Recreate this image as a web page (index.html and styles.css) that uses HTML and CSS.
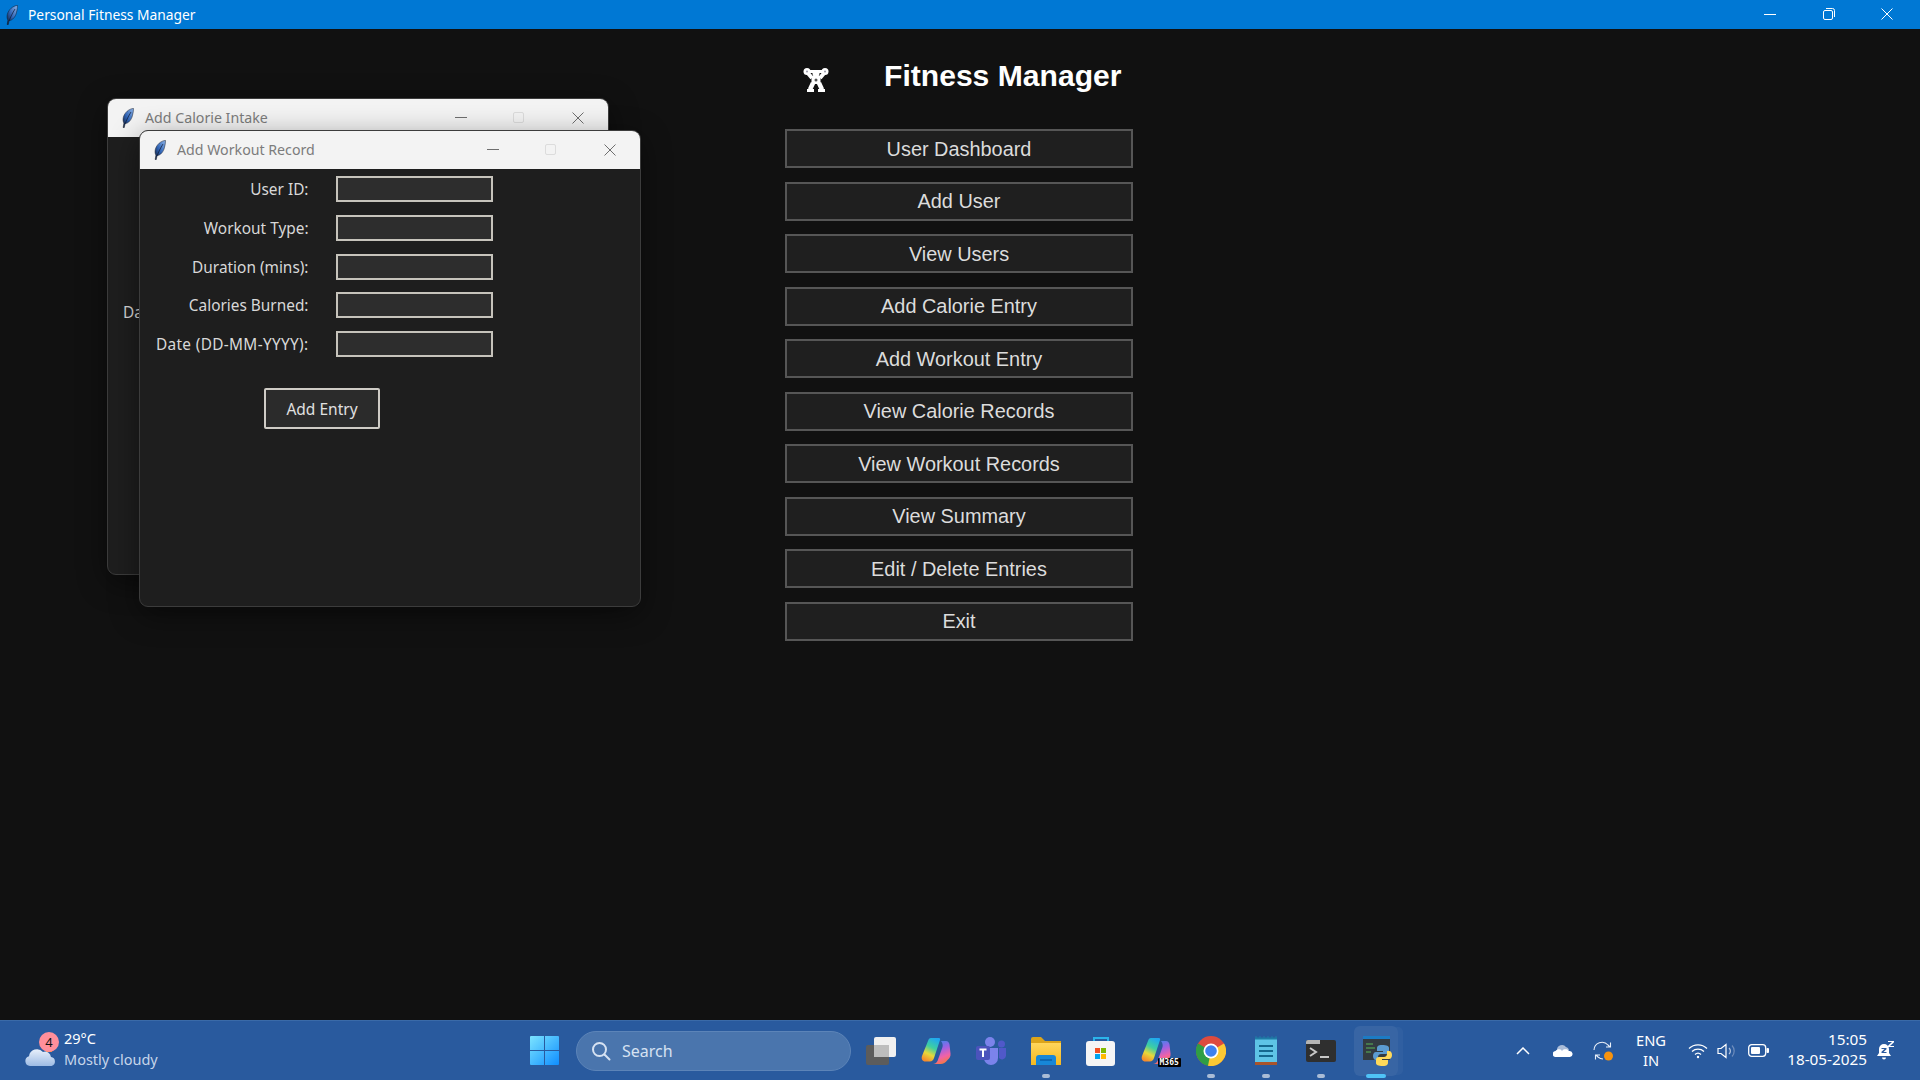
FILE: index.html
```html
<!DOCTYPE html>
<html lang="en">
<head>
<meta charset="utf-8">
<title>Personal Fitness Manager</title>
<link rel="stylesheet" href="styles.css">
</head>
<body>
<svg class="defs" width="0" height="0" aria-hidden="true">
  <defs>
    <linearGradient id="feather" x1="1" y1="0" x2="0" y2="1"><stop offset="0" stop-color="#8fb6ea"/><stop offset=".55" stop-color="#2f63b5"/><stop offset="1" stop-color="#10192c"/></linearGradient>
    <linearGradient id="winlogo" x1="0" y1="0" x2="1" y2="1"><stop offset="0" stop-color="#7ce4ff"/><stop offset="1" stop-color="#0f8eff"/></linearGradient>
    <linearGradient id="cloud" x1="0" y1="0" x2="0" y2="1"><stop offset="0" stop-color="#e8f0fb"/><stop offset="1" stop-color="#9dbbe4"/></linearGradient>
    <linearGradient id="copa" x1=".3" y1="0" x2=".6" y2="1"><stop offset="0" stop-color="#3f86ea"/><stop offset=".35" stop-color="#9b62e6"/><stop offset=".7" stop-color="#f062a8"/><stop offset="1" stop-color="#f57a3c"/></linearGradient>
    <linearGradient id="copb" x1=".7" y1="0" x2=".3" y2="1"><stop offset="0" stop-color="#1fa8f0"/><stop offset=".4" stop-color="#3fd0a0"/><stop offset=".7" stop-color="#e8d83a"/><stop offset="1" stop-color="#f58a2c"/></linearGradient>
    <linearGradient id="folder" x1="0" y1="0" x2="0" y2="1"><stop offset="0" stop-color="#ffd65c"/><stop offset="1" stop-color="#f5b81f"/></linearGradient>
    <symbol id="quill" viewBox="0 0 12 20"><path d="M11.500.4C7 .8 2.500 4.500 1.300 9.500c-.5 2.200-.2 4.300.6 5.600L1.200 19.500l1 .2.9-4c3.800-.6 6.200-3.900 7.300-7.900.7-2.700 1.200-5.300 1.100-7.400z" fill="url(#feather)" stroke="#10182a" stroke-width=".5"/><path d="M9 4C6.500 8 4.500 12 3 16" stroke="#0e1a33" stroke-width=".7" fill="none"/></symbol>
    <symbol id="copilot" viewBox="0 0 30 28"><path d="M20 4h5c2 0 3 1.500 3.500 3.500l1 9c.4 3-1 5-3 6.500-2 2.500-4 4-7 4H12c2 0 3.500-1 4.500-3l5-14c.6-1.800 0-4-1.500-6z" fill="url(#copa)"/><path d="M10 1h8c1 0 1.500 1 1 2l-6 18c-.7 2-2 3.500-4 3.500H4.500C1.500 24.500 0 22 1 19L7 4c.5-1.800 1.500-3 3-3z" fill="url(#copb)"/></symbol>
  </defs>
</svg>

<header class="app-bar">
  <svg class="app-quill" width="12" height="20"><use href="#quill"/></svg>
  <span class="app-title">Personal Fitness Manager</span>
  <div class="captions">
    <span class="cap"><svg width="12" height="12" viewBox="0 0 12 12"><path d="M0 6.500h12" stroke="#fff"/></svg></span>
    <span class="cap"><svg width="12" height="12" viewBox="0 0 12 12" fill="none" stroke="#fff"><rect x=".5" y="2.500" width="9" height="9" rx="1.500"/><path d="M3 .5h6.500a2 2 0 0 1 2 2V9"/></svg></span>
    <span class="cap"><svg width="12" height="12" viewBox="0 0 12 12"><path d="M.5.5l11 11M11.500.5l-11 11" stroke="#fff"/></svg></span>
  </div>
</header>

<main class="desktop">
  <section class="menu">
    <div class="menu-head">
      <svg class="lifter" width="26" height="26" viewBox="0 0 26 26" fill="#fff">
        <circle cx="4" cy="4.500" r="3.500"/>
        <circle cx="22" cy="4.500" r="3.500"/>
        <rect x="4" y="3" width="18" height="3"/>
        <circle cx="13" cy="6.500" r="3.500"/>
        <path d="M4 5l5 6M22 5l-5 6" stroke="#fff" stroke-width="4" fill="none"/>
        <rect x="8.500" y="9" width="9" height="8"/>
        <path d="M10 16l-3 6.500M16 16l3 6.500" stroke="#fff" stroke-width="4.500" fill="none"/>
        <rect x="4" y="22" width="7" height="3"/>
        <rect x="15" y="22" width="7" height="3"/>
        <circle cx="13" cy="13" r="1.500" fill="#555"/>
        <circle cx="4" cy="4.500" r="1" fill="#99a"/>
        <circle cx="22" cy="4.500" r="1" fill="#99a"/>
      </svg>
      <h1 class="menu-title">Fitness Manager</h1>
    </div>
    <div class="menu-list">
      <button class="menu-btn">User Dashboard</button>
      <button class="menu-btn">Add User</button>
      <button class="menu-btn">View Users</button>
      <button class="menu-btn">Add Calorie Entry</button>
      <button class="menu-btn">Add Workout Entry</button>
      <button class="menu-btn">View Calorie Records</button>
      <button class="menu-btn">View Workout Records</button>
      <button class="menu-btn">View Summary</button>
      <button class="menu-btn">Edit / Delete Entries</button>
      <button class="menu-btn">Exit</button>
    </div>
  </section>

  <section class="win win-calorie">
    <div class="win-bar">
      <svg class="win-quill" width="12" height="20"><use href="#quill"/></svg>
      <span class="win-title">Add Calorie Intake</span>
      <span class="win-cap win-min"></span><span class="win-cap win-max"></span>
      <svg class="win-x" width="12" height="12" viewBox="0 0 12 12"><path d="M.5.5l11 11M11.500.5l-11 11" stroke="#6e6e6e"/></svg>
    </div>
    <div class="win-body calorie-body"><span class="form-label">Da</span></div>
  </section>

  <section class="win win-workout">
    <div class="win-bar">
      <svg class="win-quill" width="12" height="20"><use href="#quill"/></svg>
      <span class="win-title">Add Workout Record</span>
      <span class="win-cap win-min"></span><span class="win-cap win-max"></span>
      <svg class="win-x" width="12" height="12" viewBox="0 0 12 12"><path d="M.5.5l11 11M11.500.5l-11 11" stroke="#6e6e6e"/></svg>
    </div>
    <div class="win-body">
      <div class="form">
        <label class="form-label">User ID:</label><span class="entry"></span>
        <label class="form-label">Workout Type:</label><span class="entry"></span>
        <label class="form-label">Duration (mins):</label><span class="entry"></span>
        <label class="form-label">Calories Burned:</label><span class="entry"></span>
        <label class="form-label label-caps">Date (DD-MM-YYYY):</label><span class="entry"></span>
      </div>
      <button class="add-btn">Add Entry</button>
    </div>
  </section>
</main>

<footer class="taskbar">
  <div class="weather">
    <span class="weather-icon">
      <svg width="34" height="24" viewBox="0 0 34 24"><rect x="22" y="2" width="6" height="6" fill="#f08a24"/><path d="M6 22a5 5 0 0 1-1-9.800A8 8 0 0 1 19 8a6 6 0 0 1 8 5 4.600 4.600 0 0 1 .5 9z" fill="url(#cloud)"/></svg>
      <span class="badge">4</span>
    </span>
    <div class="weather-text"><span class="temp">29°C</span><span class="cond">Mostly cloudy</span></div>
  </div>

  <div class="start">
    <svg width="29" height="29" viewBox="0 0 29 29" fill="url(#winlogo)"><path d="M1 0h13v14H0V1a1 1 0 0 1 1-1zM15 0h13a1 1 0 0 1 1 1v13H15zM0 15h14v14H1a1 1 0 0 1-1-1zM15 15h14v13a1 1 0 0 1-1 1H15z"/></svg>
  </div>

  <div class="search">
    <svg width="20" height="20" viewBox="0 0 20 20" fill="none" stroke="#d6e2f2" stroke-width="2"><circle cx="8.500" cy="8.500" r="6.500"/><path d="M13.500 13.500l5 5" stroke-linecap="round"/></svg>
    <span class="search-text">Search</span>
  </div>

  <div class="apps">
    <span class="app"><svg width="30" height="28" viewBox="0 0 30 28"><rect x="0" y="8" width="23" height="20" rx="2" fill="#5c5c5c"/><rect x="8" y="0" width="22" height="20" rx="2" fill="#f0f0f0"/><rect x="8" y="8" width="15" height="12" fill="#bdbdbd"/></svg></span>
    <span class="app"><svg width="30" height="28"><use href="#copilot"/></svg></span>
    <span class="app"><svg width="30" height="28" viewBox="0 0 30 28"><circle cx="14" cy="5" r="5" fill="#7b83eb"/><circle cx="25.500" cy="7" r="3.500" fill="#5059c9"/><path d="M8 11h14v10a7 7 0 0 1-14 0z" fill="#7b83eb"/><path d="M23 11h7v8a4 4 0 0 1-7 2z" fill="#5059c9"/><rect x="0" y="9" width="14" height="14" rx="2" fill="#4b53bc"/><path d="M3.500 12.500h7M7 12.500v7.500" stroke="#fff" stroke-width="2"/></svg></span>
    <span class="app"><svg width="30" height="28" viewBox="0 0 30 28"><path d="M0 2a2 2 0 0 1 2-2h8l4 4h16v24H0z" fill="#dca41a"/><path d="M0 6h30v22H0z" fill="url(#folder)"/><path d="M5 28v-7a3 3 0 0 1 3-3h14a3 3 0 0 1 3 3v7z" fill="#1787d8"/><path d="M9 23h12" stroke="#0b5ea8" stroke-width="1.500"/></svg><i class="dot"></i></span>
    <span class="app"><svg width="30" height="30" viewBox="0 0 30 30"><path d="M8 7V2h14v5" fill="none" stroke="#2bb4ea" stroke-width="2"/><rect x="0" y="5" width="29" height="25" rx="3" fill="#f5f5f5"/><rect x="9" y="12" width="5" height="5" fill="#f25022"/><rect x="15" y="12" width="5" height="5" fill="#7fba00"/><rect x="9" y="18" width="5" height="5" fill="#00a4ef"/><rect x="15" y="18" width="5" height="5" fill="#ffb900"/></svg></span>
    <span class="app m365"><svg width="30" height="28"><use href="#copilot"/></svg><span class="m365-tag">M365</span></span>
    <span class="app"><svg width="30" height="30" viewBox="0 0 30 30"><circle cx="15" cy="15" r="15" fill="#dd4b3e"/><path d="M15 15L2 7.500A15 15 0 0 0 15 30l0 0z" fill="#2f9e44"/><path d="M15 15l13 -7.500A15 15 0 0 1 12 29.700z" fill="#fcc934"/><circle cx="15" cy="15" r="7.500" fill="#fff"/><circle cx="15" cy="15" r="5.800" fill="#3f81ee"/></svg><i class="dot"></i></span>
    <span class="app"><svg width="22" height="29" viewBox="0 0 22 29"><rect x="0" y="2" width="22" height="24" fill="#5ec4e6"/><path d="M1 2V0M5 2V0M9 2V0M13 2V0M17 2V0M21 2V0" stroke="#1f7da6"/><path d="M0 1.500h22v2H0z" fill="#1f7da6"/><path d="M0 26h22v3H0z" fill="#a8542c"/><path d="M4 10h14M4 15h14M4 20h14" stroke="#15698f" stroke-width="2"/></svg><i class="dot"></i></span>
    <span class="app"><svg width="30" height="22" viewBox="0 0 30 22"><rect width="30" height="22" rx="2" fill="#2f2f2f"/><path d="M0 2a2 2 0 0 1 2-2h12v4H0z" fill="#b4b4b4"/><path d="M4 8l6 4-6 4" fill="none" stroke="#c8c8c8" stroke-width="2"/><path d="M14 17h9" stroke="#c8c8c8" stroke-width="2"/></svg><i class="dot"></i></span>
    <span class="app active"><svg class="py-icon" width="30" height="30" viewBox="0 0 30 30"><rect width="27" height="23" y="1" fill="#333b42"/><rect width="27" height="3" y="0" fill="#1c7bc4"/><path d="M3 8h7M3 12h9M3 16h5" stroke="#4e8f52" stroke-width="1.500"/><path d="M19 9c-4 0-5 1.500-5 3.500V15h6v1h-7c-2 0-3 2-3 4s1 4 3 4h2v-3c0-2 1.500-3 3-3h5c2 0 3-1 3-3v-3c0-2-2-3-7-3z" fill="#5b9bd0"/><path d="M20 30c4 0 5-1.500 5-3.500V24h-6v-1h7c2 0 3-2 3-4s-1-4-3-4h-2v3c0 2-1.500 3-3 3h-5c-2 0-3 1-3 3v3c0 2 2 3 7 3z" fill="#ffd95a"/></svg><i class="dot dot-active"></i></span>
  </div>

  <div class="tray">
    <span class="tray-item chevron"><svg width="14" height="8" viewBox="0 0 14 8" fill="none" stroke="#fff" stroke-width="1.500"><path d="M1 7l6-6 6 6"/></svg></span>
    <span class="tray-item onedrive"><svg width="20" height="13" viewBox="0 0 20 13"><path d="M4 6a5 5 0 0 1 9-3 4 4 0 0 1 3 3z" fill="#a9bcd8"/><path d="M3 13a3 3 0 0 1-.5-6C4 5 7 4.500 9 6.500 11 4.800 15 5 16 7a3 3 0 0 1 1 6z" fill="#fff"/></svg></span>
    <span class="tray-item sync"><svg width="20" height="20" viewBox="0 0 20 20" fill="none" stroke="#e9eff8" stroke-width="1.100"><path d="M1 9a8 8 0 0 1 14-5l2 2M17.500 1.500V6H13"/><path d="M3 14l2 2c1.500 1.300 3 2 5 2M2.500 18.500V14H7"/><circle cx="15.500" cy="15" r="4.500" fill="#f7930e" stroke="none"/></svg></span>
    <div class="lang"><span>ENG</span><span>IN</span></div>
    <span class="tray-item wifi"><svg width="20" height="16" viewBox="0 0 20 16" fill="none" stroke="#fff" stroke-width="1.300"><path d="M1 5.500a13 13 0 0 1 18 0M4 8.500a9 9 0 0 1 12 0M7 11.500a4.500 4.500 0 0 1 6 0"/><circle cx="10" cy="14" r="1.200" fill="#fff" stroke="none"/></svg></span>
    <span class="tray-item speaker"><svg width="20" height="16" viewBox="0 0 20 16" fill="none" stroke="#fff" stroke-width="1.200"><path d="M1 5.500h3L9 1.500v13L4 10.500H1z"/><path d="M12 5a4 4 0 0 1 0 6" stroke="#b9c9e2"/><path d="M15 2.500a8 8 0 0 1 0 11" stroke="#6d8cbb"/></svg></span>
    <span class="tray-item battery"><svg width="21" height="13" viewBox="0 0 21 13"><rect x=".7" y=".7" width="17" height="11.600" rx="3" fill="none" stroke="#fff" stroke-width="1.300"/><rect x="3" y="3" width="9" height="7" rx="1" fill="#fff"/><rect x="18.500" y="4" width="2.500" height="5" rx="1" fill="#fff"/></svg></span>
    <div class="clock"><span>15:05</span><span>18-05-2025</span></div>
    <span class="tray-item bell"><svg width="18" height="20" viewBox="0 0 18 20" fill="#fff"><path d="M7 3a5 5 0 0 0-5 5v4l-2 3h14l-2-3V8a5 5 0 0 0-5-5z"/><path d="M5 16.500h4a2 2 0 0 1-4 0z"/><path d="M4.500 7h5v1.200L6.500 11h3v1h-5v-1.200l3-2.800h-3z" fill="#2a5a9f"/><path d="M11 0h6v1.200L13 5h4v1h-6V4.800L15 1h-4z"/></svg></span>
  </div>
</footer>
</body>
</html>
```

FILE: styles.css
```css
* { box-sizing: border-box; }
html, body { margin: 0; height: 100%; }
body {
  width: 1920px;
  height: 1080px;
  overflow: hidden;
  display: flex;
  flex-direction: column;
  background: #111111;
  font-family: "Noto Sans", "Open Sans", sans-serif;
}
.defs { position: absolute; }

/* main window title bar */
.app-bar {
  flex: 0 0 29px;
  display: flex;
  align-items: center;
  background: #0078d4;
  color: #fff;
  padding-left: 6px;
}
.app-quill { margin-right: 10px; }
.app-title { font-size: 13.800px; flex: 1; margin-top: -1px; }
.captions { display: flex; padding-right: 3.500px; margin-top: -2px; }
.cap { width: 58.500px; display: flex; justify-content: center; }

/* desktop area */
.desktop {
  flex: 1;
  position: relative;
  padding-left: 785px;
}
.menu { width: 348px; }
.menu-head {
  height: 100px;
  display: flex;
  align-items: center;
  padding-left: 18px;
  padding-bottom: 6px;
}
.lifter { margin-right: 55px; margin-top: 7px; flex: none; }
.menu-title {
  margin: 0;
  font: bold 30.100px "Liberation Sans", Arial, sans-serif;
  color: #fff;
  white-space: nowrap;
}
.menu-list { display: flex; flex-direction: column; gap: 13.500px; }
.menu-btn {
  height: 39px;
  background: #1f1f1f;
  border: 2px solid #565656;
  color: #dcdcdc;
  font: 19.900px "Liberation Sans", Arial, sans-serif;
  padding: 1px 0 0;
}

/* child windows */
.win {
  position: absolute;
  width: 502px;
  height: 477px;
  background: #1e1e1e;
  border: 1px solid #3c3c3c;
  border-radius: 9px;
  overflow: hidden;
  box-shadow: 0 8px 30px rgba(0, 0, 0, .45);
}
.win-calorie { left: 107px; top: 69px; }
.win-workout { left: 139px; top: 101px; }
.win-bar {
  height: 38px;
  background: #f3f3f3;
  display: flex;
  align-items: center;
  padding-left: 14px;
  position: relative;
}
.win-quill { margin-right: 11px; flex: none; }
.win-title { font-size: 14.200px; color: #7c7c7c; margin-top: -1px; }
.win-cap { position: absolute; }
.win-min { left: 347px; top: 18px; width: 12px; height: 1px; background: #6e6e6e; }
.win-max { left: 405px; top: 13px; width: 11px; height: 11px; border: 1px solid #dcdcdc; border-radius: 2px; }
.win-x { position: absolute; left: 464px; top: 13px; }
.calorie-body { padding: 162px 0 0 15px; }
.calorie-body .form-label { display: block; text-align: left; }
.win-body { color: #d8d8d8; }
.form {
  display: grid;
  grid-template-columns: 168.500px 157px;
  column-gap: 27.500px;
  row-gap: 12.750px;
  padding-top: 7px;
}
.form-label {
  font-size: 15.400px;
  color: #d8d8d8;
  text-align: right;
  line-height: 26px;
  height: 26px;
  padding-top: 1px;
  white-space: nowrap;
}
.label-caps { letter-spacing: .33px; }
.entry {
  height: 26px;
  background: #2d2d2d;
  border: 2px solid #c6c3bb;
}
.add-btn {
  display: block;
  margin: 31px 0 0 124px;
  width: 116px;
  height: 41px;
  background: #2b2b2b;
  border: 2px solid #cfccc6;
  border-radius: 2px;
  color: #e0e0e0;
  font: 15.500px "Noto Sans", "Open Sans", sans-serif;
  padding: 1px 0 0;
}

/* taskbar */
.taskbar {
  flex: 0 0 60px;
  display: flex;
  align-items: center;
  background: #295a9e;
  border-top: 1px solid #3a6aa8;
  color: #fff;
}
.weather {
  width: 530px;
  display: flex;
  align-items: center;
  padding-left: 24px;
  gap: 6px;
}
.weather-icon { position: relative; width: 34px; height: 34px; display: flex; align-items: flex-end; }
.badge {
  position: absolute;
  left: 15px;
  top: -2px;
  width: 20px;
  height: 20px;
  border-radius: 50%;
  background: #ff8f9b;
  color: #111;
  font-size: 13px;
  line-height: 20px;
  text-align: center;
}
.weather-text { display: flex; flex-direction: column; line-height: 21px; font-size: 14.500px; margin-top: -3px; }
.temp { color: #fff; }
.cond { color: #c6d5ea; }
.start { width: 46px; display: flex; }
.search {
  width: 275px;
  height: 40px;
  border-radius: 20px;
  background: #4a75ad;
  border: 1px solid #5c84b8;
  display: flex;
  align-items: center;
  padding-left: 14px;
  gap: 11px;
}
.search-text { font-size: 16px; color: #d6e2f2; }
.apps { display: flex; margin-left: 2.500px; }
.app {
  position: relative;
  width: 55px;
  height: 50px;
  display: flex;
  align-items: center;
  justify-content: center;
}
.active {
  background: rgba(255, 255, 255, .07);
  border-radius: 6px;
  box-shadow: 6px 0 0 -1px rgba(255, 255, 255, .035);
  width: 44px;
  margin: 0 5.500px;
}
.py-icon { margin-left: 4px; }
.dot {
  position: absolute;
  left: 50%;
  bottom: -2px;
  width: 8px;
  height: 4px;
  margin-left: -4px;
  border-radius: 2px;
  background: #a9bcd6;
}
.dot-active { width: 20px; margin-left: -10px; background: #4fc3f7; }
.m365-tag {
  position: absolute;
  left: 29px;
  top: 32px;
  background: #000;
  color: #fff;
  font: bold 8px "DejaVu Sans Mono", monospace;
  padding: 0 2px;
  line-height: 9px;
  border-radius: 1px;
}
.tray { display: flex; align-items: center; margin-left: 99.500px; }
.tray-item { display: flex; justify-content: center; align-items: center; }
.chevron { width: 40px; }
.onedrive { width: 40px; }
.sync { width: 40px; }
.lang {
  width: 56px;
  display: flex;
  flex-direction: column;
  align-items: center;
  font-size: 14.700px;
  line-height: 20px;
  margin-top: -2px;
}
.wifi { width: 38px; }
.speaker { width: 20px; }
.battery { width: 42px; }
.clock {
  width: 88px;
  display: flex;
  flex-direction: column;
  align-items: flex-end;
  font-size: 15.300px;
  line-height: 20px;
  margin-top: -3px;
}
.bell { width: 38px; }
```
